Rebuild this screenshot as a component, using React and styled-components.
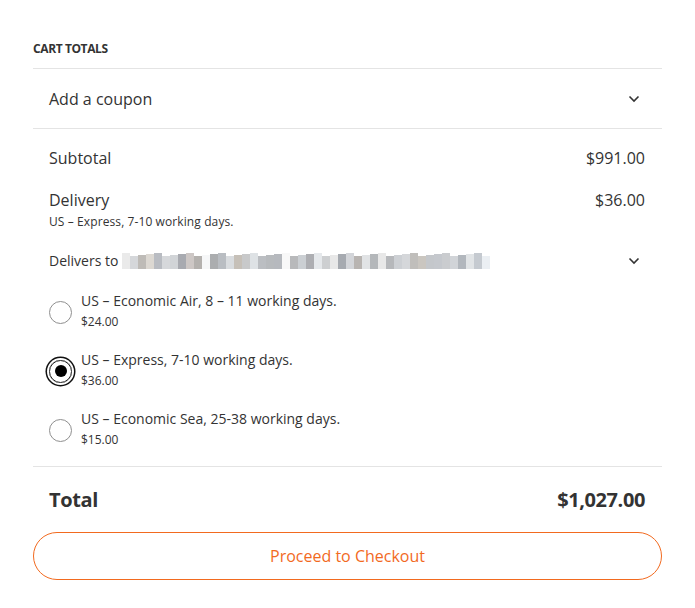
import React from "react";
import styled, { createGlobalStyle } from "styled-components";

const Global = createGlobalStyle`
  html, body { margin: 0; padding: 0; background: #fff; }
  body { font-family: "Open Sans", "Noto Sans", sans-serif; color: #333; }
  * { box-sizing: border-box; }
`;

const Card = styled.div`
  width: 629px;
  margin: 0 0 0 33px;
  padding-top: 41px;
`;

const Heading = styled.div`
  font-size: 12px;
  font-weight: 700;
  line-height: 16px;
  letter-spacing: -0.4px;
  color: #333;
  padding-bottom: 11px;
  border-bottom: 1px solid #e4e4e4;
`;

const CouponRow = styled.div`
  height: 60px;
  display: flex;
  align-items: center;
  justify-content: space-between;
  padding: 0 22px 0 16px;
  border-bottom: 1px solid #e4e4e4;
  font-size: 16px;
`;

const Section = styled.div`
  padding: 18px 17px 18px 16px;
  border-bottom: 1px solid #e4e4e4;
`;

const Row = styled.div`
  display: flex;
  justify-content: space-between;
  align-items: flex-start;
  font-size: 16px;
  line-height: 22px;
  margin-top: ${(p) => p.$mt || 0}px;
`;

const SubLine = styled.div`
  font-size: 12px;
  line-height: 16px;
  margin-top: 3px;
  letter-spacing: 0.1px;
`;

const DeliversRow = styled.div`
  display: flex;
  align-items: center;
  justify-content: space-between;
  font-size: 14px;
  line-height: 20px;
  margin-top: 21px;
  padding-right: 5px;
`;

const DeliversLeft = styled.div`
  display: flex;
  align-items: center;
`;

const Mosaic = styled.span`
  display: inline-flex;
  margin-left: 4px;
  height: 16px;
  align-items: stretch;
`;

const Tile = styled.span`
  width: 8px;
  background: ${(p) => p.$c};
  opacity: ${(p) => p.$o};
  margin-top: ${(p) => p.$t}px;
`;

const Options = styled.div`
  display: flex;
  flex-direction: column;
  gap: 20px;
  margin-top: 20px;
`;

const Option = styled.label`
  display: flex;
  align-items: center;
  gap: 9px;
`;

const Radio = styled.span`
  flex: none;
  width: 23px;
  height: 23px;
  border-radius: 50%;
  border: 1.5px solid ${(p) => (p.$checked ? "#222" : "#8f8f8f")};
  display: flex;
  align-items: center;
  justify-content: center;
  margin-top: 3px;
  box-shadow: ${(p) =>
    p.$checked ? "0 0 0 2px #fff, 0 0 0 3.5px #111" : "none"};
`;

const Dot = styled.span`
  width: 12px;
  height: 12px;
  border-radius: 50%;
  background: #000;
`;

const OptionText = styled.div`
  display: flex;
  flex-direction: column;
`;

const OptionLabel = styled.span`
  font-size: 14px;
  line-height: 20px;
`;

const OptionPrice = styled.span`
  font-size: 12px;
  line-height: 16px;
  margin-top: 3px;
`;

const TotalRow = styled.div`
  display: flex;
  justify-content: space-between;
  align-items: center;
  padding: 0 17px 0 16px;
  margin-top: 19px;
  font-size: 20px;
  font-weight: 700;
  line-height: 28px;
  letter-spacing: -0.4px;
`;

const Button = styled.button`
  display: block;
  width: 100%;
  height: 48px;
  margin-top: 18px;
  border: 1px solid #f26a1f;
  border-radius: 24px;
  background: #fff;
  color: #f26a1f;
  font-family: "Open Sans", "Noto Sans", sans-serif;
  font-size: 16px;
  cursor: pointer;
`;

const Chevron = () => (
  <svg width="12" height="8" viewBox="0 0 12 8" fill="none">
    <path d="M1.5 1.5 L6 6 L10.5 1.5" stroke="#333" strokeWidth="1.6" />
  </svg>
);

const tileColors = [
  "#d8d8d8", "#c6c8cc", "#b8b4b0", "#c9c2b8", "#a9adb5", "#b4b8be", "#c0c4c8",
  "#9fa2a8", "#b0a8a4", "#a3a09c", "#eef0f2", "#8c8e92", "#b2b6bc", "#c3c8cd",
  "#b9b2a8", "#9a9c9e", "#d2d7dc", "#b4b8bc", "#8f9398", "#a6aab0", "#f2f2f2",
  "#9d9fa2", "#c6cacf", "#7e8186", "#dfe3e7", "#a4a8ac", "#e0e0e0", "#9da2a8",
  "#babec4", "#a8a4a0", "#c8ccd0", "#989ca0", "#e6e6e6", "#8d9095", "#c2c6ca",
  "#b3b7bb", "#a9a6a2", "#c5c0ba", "#a3a8ae", "#b8bcc2", "#9ea3a8", "#c0c4ca",
  "#aab0b6", "#d0d4d8", "#b8bec6", "#dae2ea",
];

const options = [
  { label: "US – Economic Air, 8 – 11 working days.", price: "$24.00" },
  { label: "US – Express, 7-10 working days.", price: "$36.00", checked: true },
  { label: "US – Economic Sea, 25-38 working days.", price: "$15.00" },
];

export default function App() {
  return (
    <>
      <Global />
      <Card>
        <Heading>CART TOTALS</Heading>
        <CouponRow>
          <span>Add a coupon</span>
          <Chevron />
        </CouponRow>
        <Section>
          <Row>
            <span>Subtotal</span>
            <span>$991.00</span>
          </Row>
          <Row $mt={20}>
            <span>Delivery</span>
            <span>$36.00</span>
          </Row>
          <SubLine>US – Express, 7-10 working days.</SubLine>
          <DeliversRow>
            <DeliversLeft>
              <span>Delivers to</span>
              <Mosaic>
                {tileColors.map((c, i) => (
                  <Tile key={i} $c={c} $o={0.55 + ((i * 7) % 5) * 0.09} $t={(i * 3) % 4} />
                ))}
              </Mosaic>
            </DeliversLeft>
            <Chevron />
          </DeliversRow>
          <Options>
            {options.map((o) => (
              <Option key={o.label}>
                <Radio $checked={o.checked}>{o.checked && <Dot />}</Radio>
                <OptionText>
                  <OptionLabel>{o.label}</OptionLabel>
                  <OptionPrice>{o.price}</OptionPrice>
                </OptionText>
              </Option>
            ))}
          </Options>
        </Section>
        <TotalRow>
          <span>Total</span>
          <span>$1,027.00</span>
        </TotalRow>
        <Button>Proceed to Checkout</Button>
      </Card>
    </>
  );
}
